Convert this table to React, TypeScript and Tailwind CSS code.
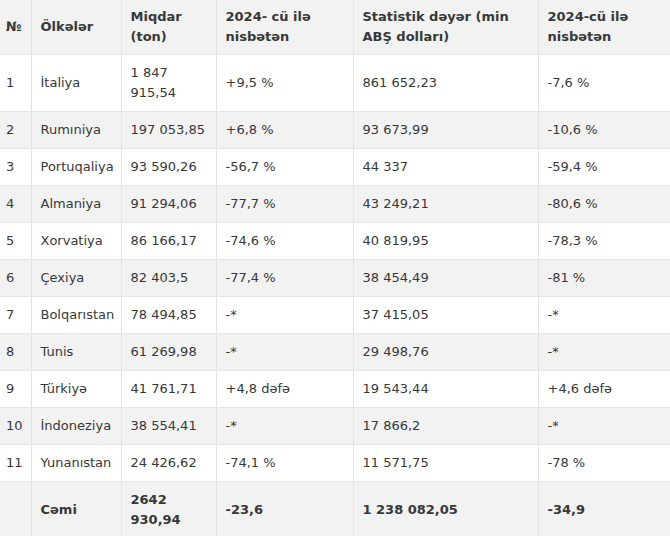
const rows: [string, string, string, string, string, string][] = [
  ["1", "İtaliya", "1 847 915,54", "+9,5 %", "861 652,23", "-7,6 %"],
  ["2", "Rumıniya", "197 053,85", "+6,8 %", "93 673,99", "-10,6 %"],
  ["3", "Portuqaliya", "93 590,26", "-56,7 %", "44 337", "-59,4 %"],
  ["4", "Almaniya", "91 294,06", "-77,7 %", "43 249,21", "-80,6 %"],
  ["5", "Xorvatiya", "86 166,17", "-74,6 %", "40 819,95", "-78,3 %"],
  ["6", "Çexiya", "82 403,5", "-77,4 %", "38 454,49", "-81 %"],
  ["7", "Bolqarıstan", "78 494,85", "-*", "37 415,05", "-*"],
  ["8", "Tunis", "61 269,98", "-*", "29 498,76", "-*"],
  ["9", "Türkiyə", "41 761,71", "+4,8 dəfə", "19 543,44", "+4,6 dəfə"],
  ["10", "İndoneziya", "38 554,41", "-*", "17 866,2", "-*"],
  ["11", "Yunanıstan", "24 426,62", "-74,1 %", "11 571,75", "-78 %"],
]

const th = "border-b border-l border-[#e4e4e4] first:border-l-0 px-[9px] pt-[7px] pb-[7px] text-left align-middle font-bold"
const td = "border-b border-l border-[#e4e4e4] first:border-l-0 px-[9px] py-[8px] align-middle"

export default function App() {
  return (
    <div className="w-[670px] h-[536px] overflow-hidden bg-white">
      <table
        className="w-[670px] table-fixed border-collapse text-[13px] leading-[20px] text-[#383838]"
        style={{ fontFamily: '"DejaVu Sans", Verdana, sans-serif' }}
      >
        <colgroup>
          <col className="w-[31px]" />
          <col className="w-[90px]" />
          <col className="w-[95px]" />
          <col className="w-[137px]" />
          <col className="w-[185px]" />
          <col className="w-[132px]" />
        </colgroup>
        <thead>
          <tr className="bg-[#f2f2f2]">
            <th className={th + " pl-[6px] pr-0"}>№</th>
            <th className={th}>Ölkələr</th>
            <th className={th}>Miqdar (ton)</th>
            <th className={th}>2024- cü ilə nisbətən</th>
            <th className={th}>Statistik dəyər (min ABŞ dolları)</th>
            <th className={th}>2024-cü ilə nisbətən</th>
          </tr>
        </thead>
        <tbody>
          {rows.map((r) => (
            <tr key={r[0]} className="odd:bg-white even:bg-[#f2f2f2]">
              <td className={td + " pl-[6px] pr-0"}>{r[0]}</td>
              <td className={td}>{r[1]}</td>
              <td className={td}>{r[2]}</td>
              <td className={td}>{r[3]}</td>
              <td className={td}>{r[4]}</td>
              <td className={td}>{r[5]}</td>
            </tr>
          ))}
          <tr className="bg-[#f2f2f2] font-bold">
            <td className={td + " pl-[6px] pr-0"}></td>
            <td className={td}>Cəmi</td>
            <td className={td}>2642 930,94</td>
            <td className={td}>-23,6</td>
            <td className={td}>1 238 082,05</td>
            <td className={td}>-34,9</td>
          </tr>
        </tbody>
      </table>
    </div>
  )
}
